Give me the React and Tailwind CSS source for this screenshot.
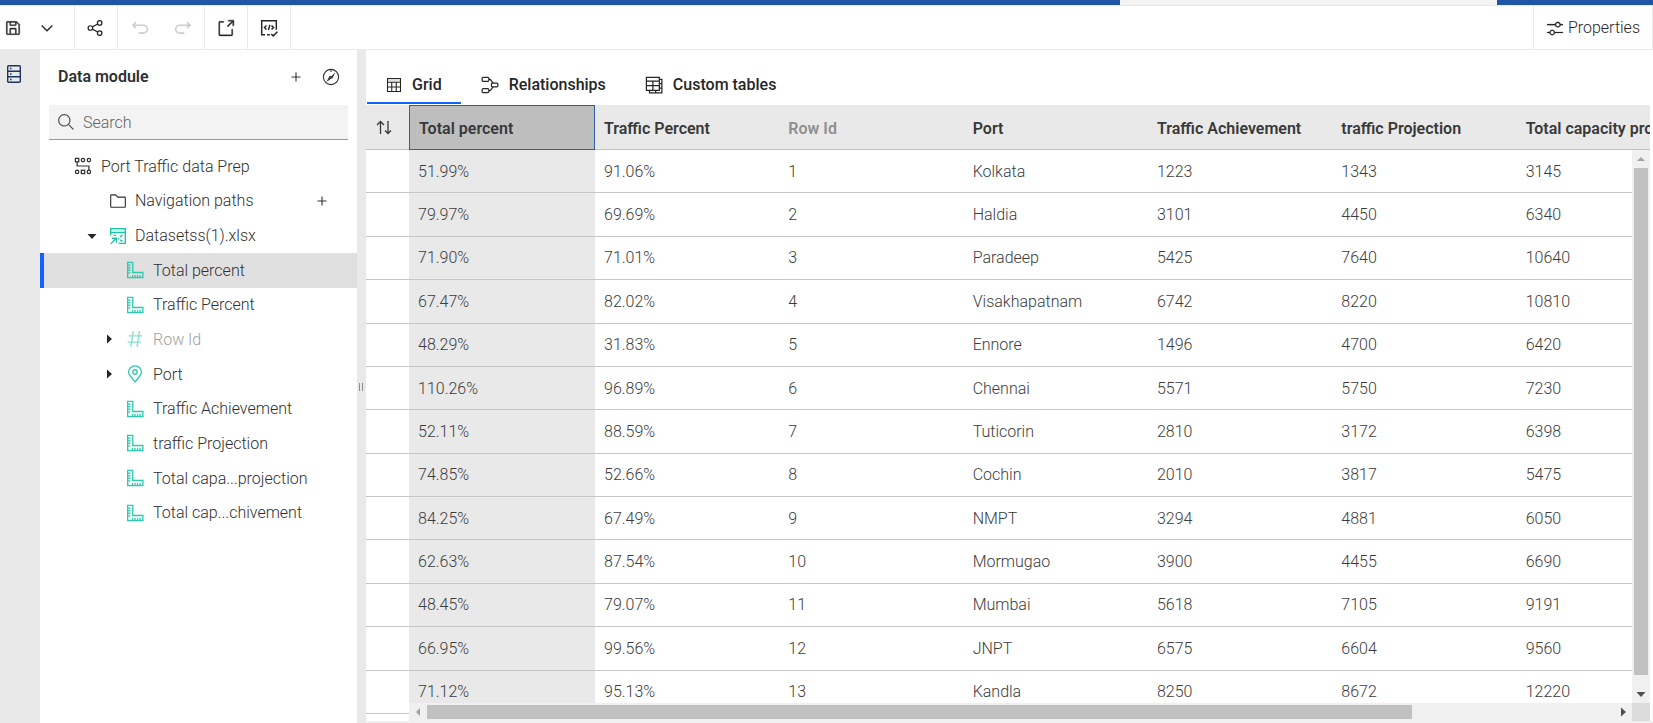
import React from "react";

function Icon({ size = 16, className = "", children }) {
  return (
    <svg width={size} height={size} viewBox="0 0 32 32" fill="currentColor" aria-hidden="true" className={"shrink-0 " + className}>
      {children}
    </svg>
  );
}

function Stroke({ children, width = 2 }) {
  return <g fill="none" stroke="currentColor" strokeWidth={width}>{children}</g>;
}

const SaveIcon = () => (
  <Icon size={18}>
    <path d="M27.71,9.29l-5-5A1,1,0,0,0,22,4H6A2,2,0,0,0,4,6V26a2,2,0,0,0,2,2H26a2,2,0,0,0,2-2V10A1,1,0,0,0,27.71,9.29ZM12,6h8v4H12Zm8,20H12V18h8Zm2,0V18a2,2,0,0,0-2-2H12a2,2,0,0,0-2,2v8H6V6h4v4a2,2,0,0,0,2,2h8a2,2,0,0,0,2-2V6.41l4,4V26Z" stroke="currentColor" strokeWidth="0.6" />
  </Icon>
);

const ChevronIcon = () => (
  <Icon size={18}>
    <Stroke width={2.4}><path d="M6.5 11.500 16 21l9.500-9.500" /></Stroke>
  </Icon>
);

const ShareIcon = () => (
  <Icon size={18}>
    <Stroke width={2.2}>
      <circle cx="6" cy="16" r="4" />
      <circle cx="22.500" cy="7" r="4" />
      <circle cx="22.500" cy="25" r="4" />
      <path d="M9.500 14 19 9M9.500 18 19 23" />
    </Stroke>
  </Icon>
);

const UndoIcon = ({ flip }) => (
  <Icon size={18}>
    <path
      transform={flip ? "translate(32 0) scale(-1 1)" : undefined}
      d="M22,10H5.8149l3.5874-3.5859L8,5,2,11,8,17l1.4023-1.4146L5.8179,12H22a6,6,0,0,1,0,12H14v2h8a8,8,0,0,0,0-16Z"
      stroke="currentColor"
      strokeWidth="0.6"
    />
  </Icon>
);

const LaunchIcon = () => (
  <Icon size={18}>
    <path d="M26,30H5A2,2,0,0,1,3,28V6A2,2,0,0,1,5,4H12V6H5V28H26V18h2V28A2,2,0,0,1,26,30Z" stroke="currentColor" strokeWidth="0.6" />
    <path d="M20 2v2h6.586L18 12.586 19.414 14 28 5.414V12h2V2Z" stroke="currentColor" strokeWidth="0.8" />
  </Icon>
);

const ValidateIcon = () => (
  <Icon size={18}>
    <Stroke width={2.6}>
      <path d="M9 28H3V3h26v16M12.500 28h5" />
      <path d="M11.500 11.500 8 15l3.500 3.500M20.500 11.500 24 15l-3.500 3.500M17.500 10.500l-2.500 9" />
      <path d="M20 26.500l3.500 3.500L31 22.500" />
    </Stroke>
  </Icon>
);

const AdjustIcon = () => (
  <Icon size={18}>
    <path d="M30,9h-4.100c-0.500-2.300-2.500-4-4.900-4s-4.400,1.700-4.900,4H2v2h14.100c0.500,2.300,2.500,4,4.900,4s4.400-1.700,4.900-4H30V9z M21,13c-1.700,0-3-1.300-3-3s1.300-3,3-3s3,1.300,3,3S22.700,13,21,13z M2,25h4.100c0.500,2.300,2.500,4,4.900,4s4.400-1.700,4.900-4H30v-2H15.900c-0.500-2.300-2.500-4-4.900-4s-4.400,1.700-4.900,4H2V25z M11,27c-1.700,0-3-1.300-3-3s1.300-3,3-3s3,1.300,3,3S12.700,27,11,27z" stroke="currentColor" strokeWidth="0.4" />
  </Icon>
);

const PlusIcon = () => (
  <Icon size={16}>
    <Stroke width={2.2}><path d="M16 7v18M7 16h18" /></Stroke>
  </Icon>
);

const CompassIcon = () => (
  <Icon size={18}>
    <Stroke width={2}>
      <circle cx="16" cy="16" r="13.500" />
      <path d="M16 4v3" />
      <circle cx="15.500" cy="16.500" r="1.800" />
    </Stroke>
    <path d="M24 7.500 18.500 18l-2-3.500ZM8 25l5-10.500 3.500 4Z" />
  </Icon>
);

const SearchIcon = () => (
  <Icon size={18} className="text-[#525252]">
    <path d="M30,28.586l-8.552-8.552a11.018,11.018,0,1,0-1.414,1.414L28.586,30ZM4,13a9,9,0,1,1,9,9A9.010,9.010,0,0,1,4,13Z" />
  </Icon>
);

const ServerIcon = () => (
  <svg width="14" height="18" viewBox="0 0 14 18" fill="none" stroke="currentColor" strokeWidth="1.400" aria-hidden="true">
    <rect x="0.700" y="0.700" width="12.600" height="16.600" rx="1" />
    <path d="M1 6.200h12M1 11.800h12M3 3.500h1.500M3 9h1.500M3 14.500h1.500" />
  </svg>
);

const GridIcon = () => (
  <Icon size={16}>
    <Stroke width={2.2}>
      <path d="M3 3h26v26H3ZM3 10.500h26M3 20h26M11.500 10.500V29M20.500 10.500V29" />
    </Stroke>
    <path d="M3 3h26v6H3Z" opacity="0.15" />
  </Icon>
);

const RelationIcon = () => (
  <Icon size={18}>
    <Stroke width={2.2}>
      <rect x="2" y="2.500" width="12" height="7" rx="2" />
      <rect x="2" y="22.500" width="12" height="7" rx="2" />
      <rect x="18.500" y="12.500" width="11.500" height="7" rx="2" />
      <path d="M14 6h2.500l5 6.500M14 26h2.500l5-6.500" />
    </Stroke>
  </Icon>
);

const TablesIcon = () => (
  <Icon size={18}>
    <Stroke width={2.2}>
      <path d="M2.500 2.500h23v23h-23ZM2.500 9h23M2.500 17h23M14 9v16.500" />
      <path d="M25.500 6H30v24H8v-4.500M25.500 13.500H30M25.500 21.500H30M19 26v4" />
    </Stroke>
  </Icon>
);

const SortIcon = () => (
  <svg width="16" height="16" viewBox="0 0 16 16" fill="none" stroke="currentColor" strokeWidth="1.300" aria-hidden="true">
    <path d="M4.500 14V1.500M1 5l3.500-3.500L8 5M12 1v12.500M9 10.500l3 3 3-3" />
  </svg>
);

const ModuleIcon = () => (
  <Icon size={18}>
    <Stroke width={2.2}>
      <rect x="2.500" y="2.500" width="6" height="6" />
      <circle cx="16" cy="5.500" r="3" />
      <circle cx="26.500" cy="5.500" r="3" />
      <path d="M5.500 9v7h21v7" />
      <circle cx="5.500" cy="26.500" r="3" />
      <rect x="13" y="23.500" width="6" height="6" />
      <circle cx="26.500" cy="26.500" r="3" />
    </Stroke>
  </Icon>
);

const FolderIcon = () => (
  <Icon size={18}>
    <path d="M11.170,6l3.420,3.410.580.590H28V26H4V6h7.170m0-2H4A2,2,0,0,0,2,6V26a2,2,0,0,0,2,2H28a2,2,0,0,0,2-2V10a2,2,0,0,0-2-2H16L12.590,4.590A2,2,0,0,0,11.170,4Z" />
  </Icon>
);

const DatasetIcon = () => (
  <Icon size={18} className="text-[#1cc4a8]">
    <Stroke width={2.4}>
      <path d="M3 15V3h26v26H17M3 10h26" />
      <path d="M3 30l9-9M5 20h8v8" />
      <path d="M8 15h5M24 14.500l-4 3M16 20l2 2M20 23l4 2.500" />
    </Stroke>
    <path d="M4 4h24v5H4Z" opacity="0.250" />
  </Icon>
);

const MeasureIcon = () => (
  <Icon size={18} className="text-[#2fc9b0]">
    <Stroke width={2.4}>
      <path d="M3 2.500h9v18h18v9H3Z" />
      <path d="M4 7.500h4M4 12h4M4 16.500h4M4 21h4M11.500 29v-4M16 29v-4M20.500 29v-4M25 29v-4" />
    </Stroke>
  </Icon>
);

const HashIcon = () => (
  <Icon size={18} className="text-[#86dfd1]">
    <Stroke width={2.4}>
      <path d="M13 2 8.500 30M24 2l-4.500 28M5 10.500h24M3 21.500h24" />
    </Stroke>
  </Icon>
);

const PinIcon = () => (
  <Icon size={18} className="text-[#2fc9b0]">
    <Stroke width={2.4}>
      <path d="M16 30 7.500 19.500C5.500 17 4.500 15 4.500 12.500a11.500 11 0 0 1 23 0c0 2.500-1 4.500-3 7Z" />
      <circle cx="16" cy="12.500" r="4" />
    </Stroke>
  </Icon>
);

function Caret({ dir, className = "text-[#262626]" }) {
  const d = {
    down: "M0.500 3h9L5 8Z",
    up: "M1 7h8L5 3Z",
    right: "M3 0.500v9L8 5Z",
    left: "M7 1v8L3 5Z",
  }[dir];
  return (
    <svg width="10" height="10" viewBox="0 0 10 10" fill="currentColor" aria-hidden="true" className={"shrink-0 " + className}>
      <path d={d} />
    </svg>
  );
}

const toolButton = "flex h-full w-[43px] items-center justify-center";
const divided = " border-r border-[#ebebeb] pr-px";

function Toolbar() {
  return (
    <div className="flex h-[44px] shrink-0 justify-between border-b border-[#ebebeb] text-[#262626]">
      <div className="flex">
        <div className="flex w-[75px] border-r border-[#ebebeb]">
          <button aria-label="Save" className="flex h-full w-[26px] items-center justify-center"><SaveIcon /></button>
          <button aria-label="Save options" className="flex h-full w-[42px] items-center justify-center"><ChevronIcon /></button>
        </div>
        <button aria-label="Share" className={toolButton + divided}><ShareIcon /></button>
        <div className="flex w-[87px] justify-between border-r border-[#ebebeb] text-[#c6c6c6]">
          <button aria-label="Undo" disabled className={toolButton}><UndoIcon /></button>
          <button aria-label="Redo" disabled className={toolButton}><UndoIcon flip /></button>
        </div>
        <button aria-label="Open in new window" className={toolButton + divided}><LaunchIcon /></button>
        <button aria-label="Validate" className={toolButton + divided}><ValidateIcon /></button>
      </div>
      <button className="flex items-center gap-1 border-x border-[#ebebeb] px-3">
        <AdjustIcon />
        <span className="font-light">Properties</span>
      </button>
    </div>
  );
}

const measures = ["Traffic Achievement", "traffic Projection", "Total capa...projection", "Total cap...chivement"];

function TreeLeaf({ label, icon, caret, selected, muted }) {
  return (
    <li
      className={
        "flex items-center border-l-4 pl-[60px] " +
        (selected ? "border-[#0f62fe] bg-[#e0e0e0] " : "border-transparent ") +
        (muted ? "text-[#a0a0a0]" : "")
      }
    >
      <span className="flex w-[22px]">{caret && <Caret dir="right" />}</span>
      {icon}
      <span className="pt-px pl-[9px]">{label}</span>
    </li>
  );
}

function Sidebar() {
  return (
    <aside className="flex w-[317px] shrink-0 flex-col bg-white text-[#303030]">
      <div className="flex h-[54px] items-center pr-[17px] pl-[18px]">
        <h1 className="grow font-semibold text-[#303030]">Data module</h1>
        <button aria-label="Add" className="mr-[18px]"><PlusIcon /></button>
        <button aria-label="Explore"><CompassIcon /></button>
      </div>
      <label className="mt-px mr-[9px] ml-[9px] flex h-[35px] items-center border-b border-[#9a9a9a] bg-[#f3f3f3] pl-2">
        <SearchIcon />
        <input aria-label="Search" placeholder="Search" className="ml-2 min-w-0 grow bg-transparent pt-px font-light outline-none placeholder:text-[#616161]" />
      </label>
      <ul className="mt-[9px] grid h-[381px] auto-rows-fr font-light">
        <li className="flex items-center pl-[34px]">
          <ModuleIcon />
          <span className="pt-px pl-[9px]">Port Traffic data Prep</span>
        </li>
        <li className="flex items-center pr-[27px] pl-[69px]">
          <FolderIcon />
          <span className="grow pt-px pl-2">Navigation paths</span>
          <button aria-label="Add navigation path"><PlusIcon /></button>
        </li>
        <li className="flex items-center pl-[47px]">
          <span className="flex w-[22px]"><Caret dir="down" /></span>
          <DatasetIcon />
          <span className="pt-px pl-2">Datasetss(1).xlsx</span>
        </li>
        <TreeLeaf label="Total percent" icon={<MeasureIcon />} selected />
        <TreeLeaf label="Traffic Percent" icon={<MeasureIcon />} />
        <TreeLeaf label="Row Id" icon={<HashIcon />} caret muted />
        <TreeLeaf label="Port" icon={<PinIcon />} caret />
        {measures.map((m) => <TreeLeaf key={m} label={m} icon={<MeasureIcon />} />)}
      </ul>
    </aside>
  );
}

const columns = ["Total percent", "Traffic Percent", "Row Id", "Port", "Traffic Achievement", "traffic Projection", "Total capacity projection"];

const rows = [
  ["51.99%", "91.06%", "1", "Kolkata", "1223", "1343", "3145"],
  ["79.97%", "69.69%", "2", "Haldia", "3101", "4450", "6340"],
  ["71.90%", "71.01%", "3", "Paradeep", "5425", "7640", "10640"],
  ["67.47%", "82.02%", "4", "Visakhapatnam", "6742", "8220", "10810"],
  ["48.29%", "31.83%", "5", "Ennore", "1496", "4700", "6420"],
  ["110.26%", "96.89%", "6", "Chennai", "5571", "5750", "7230"],
  ["52.11%", "88.59%", "7", "Tuticorin", "2810", "3172", "6398"],
  ["74.85%", "52.66%", "8", "Cochin", "2010", "3817", "5475"],
  ["84.25%", "67.49%", "9", "NMPT", "3294", "4881", "6050"],
  ["62.63%", "87.54%", "10", "Mormugao", "3900", "4455", "6690"],
  ["48.45%", "79.07%", "11", "Mumbai", "5618", "7105", "9191"],
  ["66.95%", "99.56%", "12", "JNPT", "6575", "6604", "9560"],
  ["71.12%", "95.13%", "13", "Kandla", "8250", "8672", "12220"],
];

function DataGrid() {
  return (
    <div className="relative mr-[3px] min-h-0 grow overflow-hidden">
      <table className="h-[609px] w-[1335px] table-fixed border-separate border-spacing-0 text-left">
        <thead>
          <tr className="h-[45px] bg-[#e9e9e9] text-[#393939]">
            <th className="w-[43px] border-b border-[#c0c0c0] p-0">
              <button aria-label="Sort" className="flex w-full items-center pt-px pl-[10px]"><SortIcon /></button>
            </th>
            {columns.map((c, i) => (
              <th
                key={c}
                className={
                  "px-[9px] pt-[3px] pb-0 font-semibold whitespace-nowrap " +
                  (i === 0 ? "w-[186px] border border-[#2c5fa8] bg-[#bebebe]" : "border-b border-[#c0c0c0]") +
                  (i === 2 ? " text-[#8f8f8f]" : "")
                }
              >
                {c}
              </th>
            ))}
          </tr>
        </thead>
        <tbody className="font-light text-[#3c3c3c]">
          {rows.map((r) => (
            <tr key={r[2]}>
              <td className="border-b border-[#c6c6c6] p-0" />
              {r.map((v, i) => (
                <td key={i} className={"border-b border-[#c6c6c6] px-[9px] pt-px pb-0 " + (i === 0 ? "bg-[#e9e9e9]" : "")}>{v}</td>
              ))}
            </tr>
          ))}
        </tbody>
      </table>

      <div className="absolute top-[45px] right-0 bottom-[18px] flex w-[18px] flex-col items-center bg-[#f0f0f0]">
        <span className="flex h-[18px] items-center"><Caret dir="up" className="text-[#a3a3a3]" /></span>
        <div className="flex w-full grow flex-col px-[2px]">
          <div className="h-[98%] bg-[#c1c1c1]" />
        </div>
        <span className="flex h-[18px] items-center"><Caret dir="down" className="text-[#505050]" /></span>
      </div>
      <div className="absolute right-[18px] bottom-0 left-[43px] flex h-[18px] items-center bg-[#f0f0f0]">
        <span className="flex w-[18px] justify-center"><Caret dir="left" className="text-[#a3a3a3]" /></span>
        <div className="flex h-full grow py-[2px]">
          <div className="w-[83%] bg-[#c1c1c1]" />
        </div>
        <span className="flex w-[18px] justify-center"><Caret dir="right" className="text-[#505050]" /></span>
      </div>
      <div className="absolute right-0 bottom-0 size-[18px] bg-[#dcdcdc]" />
    </div>
  );
}

function Tab({ icon, label, active }) {
  return (
    <button
      role="tab"
      aria-selected={!!active}
      className={"flex h-9 items-center gap-[10px] border-b-2 px-[19px] font-medium " + (active ? "border-[#0f62fe]" : "border-transparent")}
    >
      {icon}
      {label}
    </button>
  );
}

export default function App() {
  return (
    <div className="flex h-screen flex-col overflow-hidden bg-white font-[Roboto,'Noto_Sans',sans-serif] text-base leading-5">
      <div className="flex h-[5px] shrink-0 bg-[#1f57a4]">
        <div className="ml-auto w-[377px] bg-[#f3f3f3]" />
        <div className="w-[156px]" />
      </div>
      <div className="h-px shrink-0 bg-[#e6eaf0]" />
      <Toolbar />
      <div className="flex min-h-0 grow">
        <nav className="flex w-10 shrink-0 flex-col bg-[#e9e9e9] pt-[15px] pl-[7px] text-[#1d3560]">
          <button aria-label="Data sources" className="w-[14px]"><ServerIcon /></button>
        </nav>
        <Sidebar />
        <div className="flex w-[9px] shrink-0 items-center justify-center gap-[2px] bg-[#e9e9e9] pr-px">
          <span className="h-2 w-px bg-[#8d8d8d]" />
          <span className="h-2 w-px bg-[#8d8d8d]" />
        </div>
        <main className="flex min-w-0 grow flex-col">
          <div role="tablist" className="flex h-[55px] shrink-0 items-end gap-px pb-px pl-px text-[#262626]">
            <Tab icon={<GridIcon />} label="Grid" active />
            <Tab icon={<RelationIcon />} label="Relationships" />
            <Tab icon={<TablesIcon />} label="Custom tables" />
          </div>
          <DataGrid />
          <div className="h-[2px] shrink-0 bg-[#f0f0f0]" />
        </main>
      </div>
    </div>
  );
}
